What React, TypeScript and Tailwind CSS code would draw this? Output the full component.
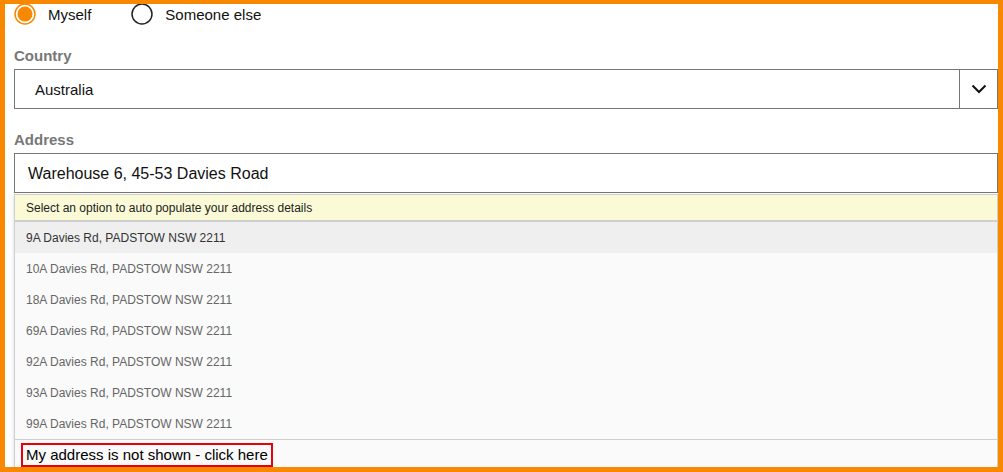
import { useState } from 'react'

const OPTIONS = [
  '9A Davies Rd, PADSTOW NSW 2211',
  '10A Davies Rd, PADSTOW NSW 2211',
  '18A Davies Rd, PADSTOW NSW 2211',
  '69A Davies Rd, PADSTOW NSW 2211',
  '92A Davies Rd, PADSTOW NSW 2211',
  '93A Davies Rd, PADSTOW NSW 2211',
  '99A Davies Rd, PADSTOW NSW 2211',
]

function Radio({ checked, label, onClick }: { checked: boolean; label: string; onClick: () => void }) {
  return (
    <button onClick={onClick} className="flex items-center gap-[12px] h-[21px]">
      <svg width="22" height="22" viewBox="0 0 22 22">
        {checked ? (
          <>
            <circle cx="11" cy="11" r="10" fill="none" stroke="#f78800" strokeWidth="1.5" />
            <circle cx="11" cy="11" r="7.5" fill="#f78800" />
          </>
        ) : (
          <circle cx="11" cy="11" r="10" fill="none" stroke="#222" strokeWidth="1.5" />
        )}
      </svg>
      <span className="text-[15px] text-[#111] pt-[3px]">{label}</span>
    </button>
  )
}

export default function App() {
  const [who, setWho] = useState<'me' | 'other'>('me')
  const [active, setActive] = useState(0)

  return (
    <div
      className="w-[1003px] h-[472px] overflow-hidden bg-white border-[#f78800] border-t-4 border-l-[5px] border-r-[5px] border-b-[5px]"
      style={{ fontFamily: '"Liberation Sans", Arial, sans-serif' }}
    >
      <div className="pl-[9px] flex flex-col">
        {/* Recipient */}
        <div className="flex items-center gap-[40px] mt-[-1px]">
          <Radio checked={who === 'me'} label="Myself" onClick={() => setWho('me')} />
          <Radio checked={who === 'other'} label="Someone else" onClick={() => setWho('other')} />
        </div>

        {/* Country */}
        <label className="mt-[23px] h-[18px] leading-[18px] text-[15px] font-bold text-[#777]">Country</label>
        <div className="mt-[4px] h-[40px] flex border border-[#767676]">
          <div className="flex-1 flex items-center pl-[20px] pt-[3px] text-[15px] text-[#111]">Australia</div>
          <div className="w-[38px] border-l border-[#767676] flex items-center justify-center">
            <svg width="16" height="10" viewBox="0 0 16 10">
              <path d="M1.5 1.5 L8 8 L14.5 1.5" fill="none" stroke="#111" strokeWidth="2" />
            </svg>
          </div>
        </div>

        {/* Address */}
        <label className="mt-[22px] h-[18px] leading-[18px] text-[15px] font-bold text-[#777]">Address</label>
        <div className="mt-[4px] h-[40px] flex items-center border border-[#767676] pl-[13px] pt-[2px] text-[16px] text-[#111]">
          Warehouse 6, 45-53 Davies Road
        </div>

        {/* Suggestions */}
        <div className="mt-[1px] border-x border-t border-[#cfcfcf] shadow-[0_2px_4px_rgba(0,0,0,0.15)]">
          <div className="h-[27px] flex items-center pl-[11px] bg-[#fafad6] border-b-2 border-[#cfcfcf] text-[12px] text-[#222]">
            Select an option to auto populate your address details
          </div>
          {OPTIONS.map((o, i) => (
            <div
              key={o}
              onMouseEnter={() => setActive(i)}
              className={`h-[31px] flex items-center pl-[11px] text-[12px] ${
                i === active ? 'bg-[#efefef] text-[#333]' : 'bg-[#fafafa] text-[#666]'
              }`}
            >
              {o}
            </div>
          ))}
          <div className="h-[30px] bg-[#fafafa] border-t border-[#cfcfcf] pt-[3px] pl-[6px]">
            <button className="h-[24px] px-[3px] border-2 border-[#e8000b] text-[15px] text-black leading-[20px]">
              My address is not shown - click here
            </button>
          </div>
        </div>
      </div>
    </div>
  )
}
